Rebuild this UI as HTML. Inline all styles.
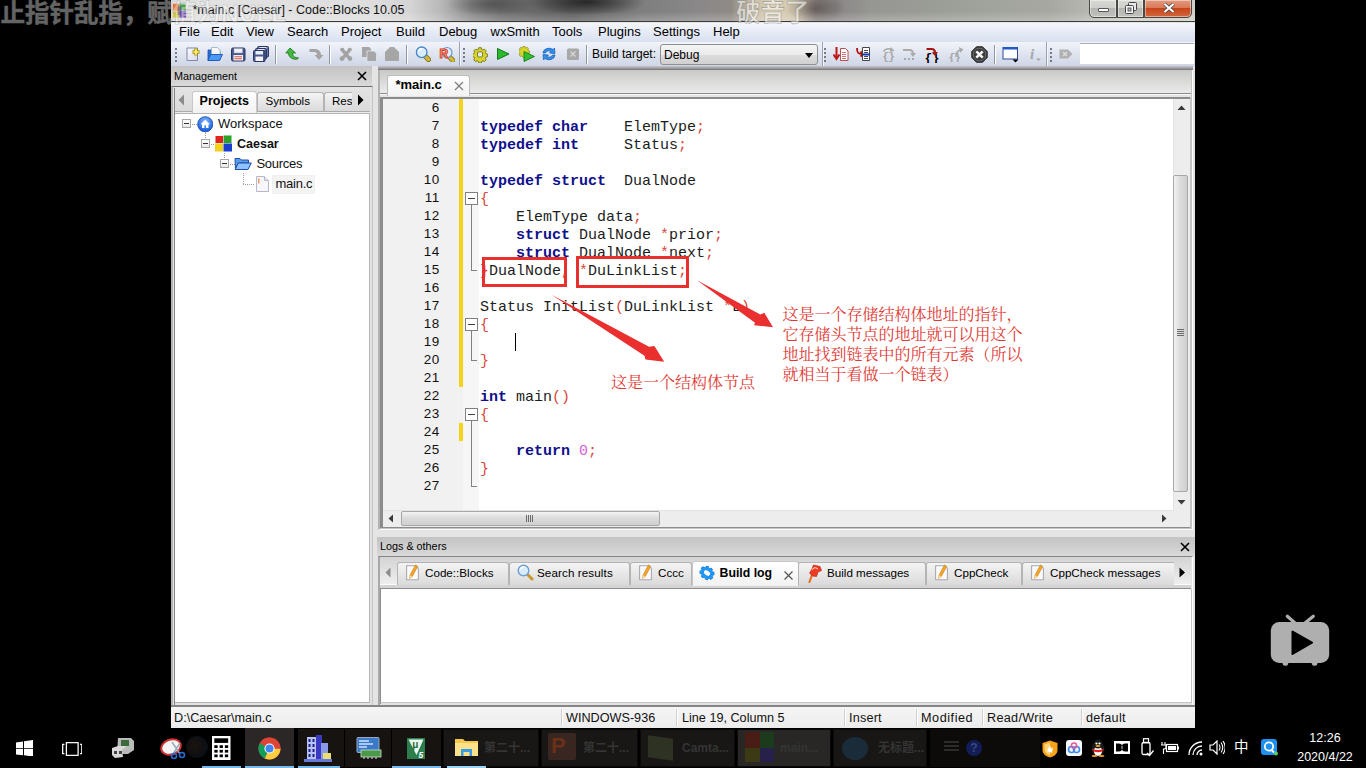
<!DOCTYPE html>
<html lang="zh">
<head>
<meta charset="utf-8">
<title>*main.c [Caesar] - Code::Blocks 10.05</title>
<style>
*{box-sizing:border-box;margin:0;padding:0}
html,body{width:1366px;height:768px;overflow:hidden;background:#000}
body{position:relative;font-family:"Liberation Sans","Noto Sans CJK SC",sans-serif;font-size:12px;color:#000}
.a{position:absolute}
.nw{white-space:nowrap}
/* window */
#win{position:absolute;left:171px;top:0;width:1024px;height:728px;background:#e4e4e4;overflow:hidden}
#title{position:absolute;left:0;top:0;width:1024px;height:22px;background:linear-gradient(rgba(255,255,255,0) 55%,rgba(255,255,255,.22) 100%),radial-gradient(ellipse 60px 13px at 415px 2px,rgba(25,25,25,.8),rgba(25,25,25,0)),radial-gradient(ellipse 45px 12px at 320px 4px,rgba(50,50,50,.5),rgba(50,50,50,0)),radial-gradient(ellipse 30px 16px at 645px 8px,rgba(70,60,60,.55),rgba(70,60,60,0)),linear-gradient(90deg,#dadada 0px,#e2e2e2 30px,#dedede 200px,#d4d4d4 240px,#b8b8b8 270px,#8c8c8c 300px,#707070 330px,#5e5e5e 400px,#6a6a6a 430px,#7e7e7e 470px,#8a8888 530px,#8f8a86 560px,#c4bba6 580px,#dcd2b8 600px,#cfc5ac 625px,#8e8684 645px,#8a8686 665px,#969692 700px,#9a9c96 760px,#a2a49e 830px,#a8a8a2 880px,#b6b6b0 915px,#c8c8c2 945px,#d0d0ca 1024px);border-bottom:1px solid #3c3c3c}
#title .t{position:absolute;left:21.5px;top:3px;font-size:12.5px;color:#111;white-space:nowrap}
#menubar{position:absolute;left:0;top:23px;width:1024px;height:19px;background:linear-gradient(#f4f6fb,#e3e8f4 60%,#d9e0f0)}
#menubar span{position:absolute;top:0.5px;font-size:13px;white-space:nowrap}
#toolbar{position:absolute;left:0;top:42px;width:1024px;height:24px;background:linear-gradient(#f2f4fa,#dfe4f0 50%,#cfd6e6)}
/* panes (coords relative to #win) */
.cap{position:absolute;height:20px;background:linear-gradient(#c3c3c3,#d9d9d9);font-size:10.8px;line-height:20px;padding-left:3px;white-space:nowrap}
.cap .x{position:absolute;right:3px;top:0;width:14px;height:20px}
.tabrow{position:absolute;background:linear-gradient(#e9e9e9,#d2d2d2)}
.tab{position:absolute;font-size:12px;white-space:nowrap;text-align:center;background:linear-gradient(#f4f4f4,#dadada);border:1px solid #b4b4b4;border-bottom:none;border-radius:3px 3px 0 0}
.tab.on{background:linear-gradient(#ffffff,#f2f2f2);font-weight:bold;border-color:#c8c8c8}
/* editor */
#ed{position:absolute;left:212px;top:99px;width:807px;height:428px;background:#fff;overflow:hidden}
#lnm{position:absolute;left:0;top:0;width:80px;height:411px;background:#f1f1f1}
.ln{position:absolute;right:23.500px;letter-spacing:.35px;width:50px;height:18px;line-height:17px;text-align:right;font-size:13.5px;color:#111}
#fold{position:absolute;left:80px;top:0;width:16px;height:411px;background:#f6f6f6}
.cl{position:absolute;left:97px;height:18px;line-height:18px;margin-top:2px;font-family:"Liberation Mono",monospace;font-size:15px;white-space:pre;color:#1c1c1c}
.cl b.k{color:#10108c;font-weight:bold}
.cl i{font-style:normal}
.cl i.o{color:#d8483c}
.cl i.n{color:#d860d8}
.fb{position:absolute;left:82px;width:13px;height:13px;border:1px solid #808080;background:#fff}
.fb:after{content:"";position:absolute;left:2px;top:5px;width:7px;height:1px;background:#404040}
.fl{position:absolute;left:88px;width:1px;background:#808080}
.fe{position:absolute;left:88px;width:6px;height:1px;background:#808080}
.red{position:absolute;border:3px solid #e8302f}
.zh{position:absolute;font-family:"Liberation Serif","Noto Serif CJK SC",serif;color:#e03a35;font-size:16px;white-space:nowrap;line-height:20px}

.tl{position:absolute;height:0;border-top:1px dotted #9a9a9a}
.tv{position:absolute;width:0;border-left:1px dotted #9a9a9a}
.tb{position:absolute;width:9px;height:9px;border:1px solid #a6a6a6;background:linear-gradient(#fff,#e8e8e8)}
.tb:after{content:"";position:absolute;left:1px;top:3px;width:5px;height:1px;background:#333}
.tt{position:absolute;font-size:13px;line-height:18px;white-space:nowrap;color:#111}

.tab.lt{top:562px;height:22.5px;line-height:20px;font-size:11.65px;text-align:left}
#status{position:absolute;left:0;top:705px;width:1024px;height:23px;background:linear-gradient(#f5f5f5,#ececec);border-top:2px solid #858585;z-index:3}
#status span{position:absolute;top:3px;font-size:12.65px;line-height:16px;white-space:nowrap;color:#111}
#status i{position:absolute;top:2px;width:1px;height:17px;background:#d0d0d0;border-right:1px solid #fff;width:2px}

.grip{position:absolute;top:47px;width:4px;height:16px;background:repeating-linear-gradient(transparent 0 1px,#5a6070 1px 3px,transparent 3px 4px);background-size:2px 4px;background-repeat:repeat-y;background-position:1px 0;opacity:.8}
.tsep{position:absolute;top:45px;width:1px;height:19px;background:#8f96a6;box-shadow:1px 0 0 #fff}

#cbtn{position:absolute;left:918px;top:0;width:104px;height:18px}
.cb{position:absolute;top:-1px;height:19px;border:1px solid #474747;background:linear-gradient(#d8d8d4 0,#cfcfca 45%,#b4b4b0 50%,#c2c2be 100%);box-shadow:inset 0 0 0 1px rgba(255,255,255,.45)}
.cb.cx{background:linear-gradient(#e39a80 0,#d97a58 45%,#c8451c 50%,#d4663c 100%)}

.dm{position:absolute;white-space:nowrap;font-family:"Liberation Sans","Noto Sans CJK SC",sans-serif;font-weight:bold;font-size:24.500px;line-height:34px;height:34px}
#tbar{position:absolute;left:0;top:728px;width:1366px;height:40px;background:#000}
#tbar .ul{position:absolute;top:37.500px;height:2.500px;background:#76b9ed}
.dimb{position:absolute;top:1px;height:38px;background:#191715;border:1px solid #0b0a09}
.dimt{position:absolute;top:11px;font-size:12px;line-height:18px;color:#343434;white-space:nowrap;font-weight:bold;font-family:"Liberation Sans","Noto Sans CJK SC",sans-serif}
.tile{position:absolute;top:1px;height:38px;background:#171311}
</style>
</head>
<body>
<div id="win">
  <div id="title">
    <svg class="a" style="left:1.300px;top:2.500px" width="15" height="15.500" viewBox="0 0 17 18" preserveAspectRatio="none"><rect x="1" y="1" width="7" height="8" fill="#e8742a"/><rect x="8.500" y="0.500" width="7" height="8" fill="#4aa848"/><rect x="1" y="9.500" width="7" height="7.500" fill="#d8c838"/><rect x="8.500" y="9" width="7.500" height="8" fill="#7a50b8"/><rect x="6" y="4" width="5" height="10" fill="#5a4a88" opacity=".55"/></svg>
    <span class="t">*main.c [Caesar] - Code::Blocks 10.05</span>
    <div id="cbtn">
      <div class="cb" style="left:0;width:28px;border-radius:0 0 0 5px"><div class="a" style="left:8px;top:8px;width:11px;height:4px;background:#fff;border:1px solid #555;border-radius:1px"></div></div>
      <div class="cb" style="left:28px;width:27px"><svg class="a" style="left:7px;top:2px" width="12" height="12" viewBox="0 0 12 12"><rect x="3.500" y="0.500" width="8" height="8" rx="1" fill="#e8e8e8" stroke="#444"/><rect x="0.500" y="3.500" width="8" height="8" rx="1" fill="#f4f4f4" stroke="#444"/><rect x="3" y="6" width="3" height="3" fill="#bbb" stroke="#444" stroke-width="0.800"/></svg></div>
      <div class="cb cx" style="left:55px;width:48px;border-radius:0 0 5px 0"><svg class="a" style="left:18px;top:3px" width="12" height="10" viewBox="0 0 12 10"><path d="M1.500 1l9 8M10.500 1l-9 8" stroke="#444" stroke-width="3.600"/><path d="M1.500 1l9 8M10.500 1l-9 8" stroke="#fff" stroke-width="2.200"/></svg></div>
    </div>
  </div>
  <div id="menubar">
    <span style="left:8px">File</span><span style="left:40px">Edit</span><span style="left:75px">View</span><span style="left:116px">Search</span><span style="left:170px">Project</span><span style="left:225px">Build</span><span style="left:268px">Debug</span><span style="left:319.5px">wxSmith</span><span style="left:381px">Tools</span><span style="left:427px">Plugins</span><span style="left:482px">Settings</span><span style="left:542px">Help</span>
  </div>
  <div id="toolbar"></div>
  <div id="tbi">
    <div class="a" style="left:287.5px;top:42px;width:1px;height:24px;background:#9aa0ae;box-shadow:1px 0 0 #f4f6fa"></div><div class="a" style="left:650.5px;top:42px;width:1px;height:24px;background:#9aa0ae;box-shadow:1px 0 0 #f4f6fa"></div><div class="a" style="left:875px;top:42px;width:1px;height:24px;background:#9aa0ae;box-shadow:1px 0 0 #f4f6fa"></div>
    <div class="grip" style="left:3px"></div>
    <svg class="a" style="left:13.5px;top:46px" width="16" height="16" viewBox="0 0 16 16"><defs><linearGradient id="pg" x1="0" y1="0" x2="1" y2="1"><stop offset="0" stop-color="#fafaff"/><stop offset="1" stop-color="#d8d8ea"/></linearGradient></defs><path d="M2 2h10.500v12.500h-10.500z" fill="url(#pg)" stroke="#8088a8"/><path d="M11 2.500v7M7.500 6h7" stroke="#a89400" stroke-width="3.400"/><path d="M11 3.300v5.400M8.300 6h5.400" stroke="#fff27a" stroke-width="1.700"/></svg>
    <svg class="a" style="left:36px;top:46px" width="16" height="16" viewBox="0 0 16 16"><path d="M1 4h3.500l1 1.500h7.500v8.500h-12z" fill="#2a6fd0" stroke="#1a4fa8" stroke-width="0.800"/><path d="M4.500 1.500h6l2.500 2.500v5h-8.500z" fill="#f4f6fa" stroke="#a0a8b8" stroke-width="0.800"/><path d="M3.800 8.500h11.700L12.500 14.500H0.800z" fill="#4a9af4" stroke="#1a56b8" stroke-width="0.900"/></svg>
    <svg class="a" style="left:59px;top:46px" width="16" height="16" viewBox="0 0 16 16"><rect x="1.500" y="2" width="13.500" height="13" rx="1.500" fill="#46588e" stroke="#2a3660"/><rect x="4" y="2.500" width="8.500" height="4.500" fill="#eef0f6" stroke="#9aa0b8" stroke-width="0.500"/><rect x="3.500" y="9" width="9.500" height="5.500" fill="#f0f0f2"/><path d="M4.500 10.700h7.500M4.500 12.700h7.500" stroke="#e0584a" stroke-width="1.100"/></svg>
    <svg class="a" style="left:81.5px;top:45.5px" width="17" height="17" viewBox="0 0 17 17"><rect x="4.500" y="0.500" width="11" height="10.500" rx="1" fill="#6a7aa8" stroke="#2a3660"/><rect x="6.500" y="1" width="7" height="2.500" fill="#e4e8f2"/><rect x="2.500" y="2.500" width="11" height="10.500" rx="1" fill="#5a6c9e" stroke="#2a3660"/><rect x="4.500" y="3" width="7" height="2.500" fill="#e4e8f2"/><rect x="0.500" y="4.500" width="11.500" height="11" rx="1" fill="#46588e" stroke="#2a3660"/><rect x="2.500" y="5" width="7.500" height="3.500" fill="#e9edf7"/><rect x="2.500" y="10.500" width="7.500" height="4.500" fill="#f4f4f4"/></svg>
    <div class="tsep" style="left:104px"></div>
    <svg class="a" style="left:112.5px;top:46px" width="16" height="16" viewBox="0 0 16 16"><path d="M6 2L1.800 7h2.700c0 3.500 2.500 6 7 6.300 1.500 0 2.500-0.500 3-1.500-3.500 0-6-1.300-6-4.800h3z" fill="#44b840" stroke="#1f7a1f" stroke-width="0.900"/></svg>
    <svg class="a" style="left:137px;top:46px" width="16" height="16" viewBox="0 0 16 16"><path d="M1.500 3h5c4 0 6.500 2.500 6.500 6h2.500l-4.500 5-4.500-5h2.500c0-2-1-3-3-3h-4.500z" fill="#a4a4a4"/></svg>
    <div class="tsep" style="left:158px"></div>
    <svg class="a" style="left:167px;top:46px" width="16" height="16" viewBox="0 0 16 16"><path d="M4 3.500l8 9.500M12 3.500l-8 9.500" stroke="#a2a2a2" stroke-width="3.400" stroke-linecap="round"/><circle cx="4" cy="12.500" r="2.300" fill="#a2a2a2"/><circle cx="12" cy="12.500" r="2.300" fill="#a2a2a2"/><circle cx="4.300" cy="3.600" r="1.900" fill="#a2a2a2"/><circle cx="11.700" cy="3.600" r="1.900" fill="#a2a2a2"/></svg>
    <svg class="a" style="left:190px;top:46px" width="16" height="16" viewBox="0 0 16 16"><path d="M1 1h7l2 2v8h-9z" fill="#a6a6a6"/><path d="M6 5h7l2.500 2.500v8h-9.500z" fill="#a6a6a6" stroke="#dfe4ee" stroke-width="0.800"/></svg>
    <svg class="a" style="left:213px;top:46px" width="16" height="16" viewBox="0 0 16 16"><path d="M1 15V6l3-3 2-2h4l2 2 3 3v9z" fill="#a6a6a6"/></svg>
    <div class="tsep" style="left:235px"></div>
    <svg class="a" style="left:243.5px;top:46px" width="16" height="16" viewBox="0 0 16 16"><path d="M10.500 10.500l3 3" stroke="#7a6a18" stroke-width="5" stroke-linecap="round"/><path d="M10.500 10.500l3 3" stroke="#d0b838" stroke-width="3.400" stroke-linecap="round"/><circle cx="6.700" cy="6.300" r="5.300" fill="#d8ecfa" stroke="#4a86c8" stroke-width="1.300"/><path d="M3.500 5.500a3.500 3.500 0 0 1 4-2.700" stroke="#fff" stroke-width="1.400" fill="none"/></svg>
    <svg class="a" style="left:266.5px;top:46px" width="17" height="16" viewBox="0 0 17 16"><path d="M12 11.500l3 3" stroke="#7a6a18" stroke-width="5" stroke-linecap="round"/><path d="M12 11.500l3 3" stroke="#d0b838" stroke-width="3.400" stroke-linecap="round"/><circle cx="9" cy="6.500" r="5" fill="#e4eef8" stroke="#6a9ad0" stroke-width="1.200"/><text x="1.500" y="11.500" font-family="Liberation Sans,sans-serif" font-weight="bold" font-size="12" fill="#f8c8b8" stroke="#d8401c" stroke-width="1">R</text></svg>
    <div class="grip" style="left:291px"></div>
    <svg class="a" style="left:301.8px;top:46.5px" width="15" height="16" viewBox="0 0 15 16"><g transform="translate(0.300 0.300) scale(0.840)"><path d="M6.500 0.500h3l0.500 2 1.500 0.700 1.800-1 2.100 2.100-1 1.800 0.700 1.500 2 0.500v3l-2 0.500-0.700 1.500 1 1.800-2.100 2.100-1.800-1-1.500 0.700-0.500 2h-3l-0.500-2-1.500-0.700-1.800 1-2.100-2.100 1-1.800-0.700-1.500-2-0.500v-3l2-0.500 0.700-1.500-1-1.800 2.100-2.100 1.800 1 1.500-0.700z" fill="#d6d430" stroke="#76760c" stroke-width="1.100"/><rect x="5" y="5.500" width="6" height="6" rx="1.200" fill="#e6e8f2" stroke="#76760c" stroke-width="1.100"/></g></svg>
    <svg class="a" style="left:324px;top:46px" width="16" height="16" viewBox="0 0 16 16"><path d="M2.500 2.500L14 8 2.500 13.500z" fill="#2eb82e" stroke="#167a1a" stroke-width="1"/></svg>
    <svg class="a" style="left:348px;top:46px" width="16" height="16" viewBox="0 0 16 16"><g transform="scale(0.62)"><path d="M6.500 0.500h3l0.500 2 1.500 0.700 1.800-1 2.100 2.100-1 1.800 0.700 1.500 2 0.500v3l-2 0.500-0.700 1.500 1 1.800-2.100 2.100-1.800-1-1.500 0.700-0.500 2h-3l-0.500-2-1.500-0.700-1.800 1-2.100-2.100 1-1.800-0.700-1.500-2-0.500v-3l2-0.500 0.700-1.500-1-1.800 2.100-2.100 1.800 1 1.500-0.700z" fill="#d8d42c" stroke="#78780c"/></g><path d="M5 5.500L15.500 10.500 5 15.500z" fill="#2fbf2f" stroke="#15801a" stroke-width="0.900"/></svg>
    <svg class="a" style="left:370px;top:46px" width="16" height="16" viewBox="0 0 16 16"><path d="M2 7a6 5 0 0 1 10-3.500l1.500-1.500 0.500 5.500-5.500-0.500 1.500-1.500a3.500 3 0 0 0-5.500 1.500z" fill="#2f8ff0" stroke="#1558b0" stroke-width="0.700"/><path d="M14 9a6 5 0 0 1-10 3.500l-1.500 1.500-0.500-5.500 5.500 0.500-1.500 1.500a3.500 3 0 0 0 5.500-1.500z" fill="#2f8ff0" stroke="#1558b0" stroke-width="0.700"/></svg>
    <svg class="a" style="left:393.5px;top:46px" width="16" height="16" viewBox="0 0 16 16"><rect x="2" y="2.500" width="12" height="11.500" rx="1.500" fill="#a8a8a8"/><path d="M5.500 5.500l5 5M10.500 5.500l-5 5" stroke="#d8d8d8" stroke-width="1.200"/></svg>
    <div class="tsep" style="left:415px"></div>
    <div class="grip" style="left:652px"></div>
    <svg class="a" style="left:661.7px;top:46px" width="16" height="16" viewBox="0 0 16 16"><path d="M3.500 1v11M0.500 8.500l3 4.500 3-4.500" stroke="#c01818" stroke-width="2" fill="none"/><path d="M7.500 2.500h5l2.500 2.500v9.500h-7.500z" fill="#fff" stroke="#b04040" stroke-width="0.900"/><path d="M9 6.500h4M9 8.500h4M9 10.500h4M9 12.500h4" stroke="#c05050" stroke-width="0.800"/></svg>
    <svg class="a" style="left:684.5px;top:46px" width="17" height="16" viewBox="0 0 17 16"><path d="M1 2c0 5 1 6 6 6M4.500 5.500l3 2.500-3 2.500" stroke="#b01010" stroke-width="1.800" fill="none"/><path d="M6.500 1.500h7v13h-7z" fill="#fff" stroke="#333" stroke-width="0.900"/><path d="M8 4.500h4M8 6.500h4M8 10.500h4M8 12.500h4" stroke="#333" stroke-width="0.900"/><path d="M7 8.500h7" stroke="#1038c0" stroke-width="2"/></svg>
    <svg class="a" style="left:708.5px;top:46px" width="16" height="16" viewBox="0 0 16 16"><path d="M3.500 5.500a5.500 4.500 0 0 1 9.500-1" stroke="#aaa" stroke-width="1.600" fill="none"/><path d="M11 1l3.500 4.200-4.800 0.300z" fill="#aaa"/><text x="2.200" y="14.200" font-family="Liberation Mono,monospace" font-weight="bold" font-size="11.500" letter-spacing="-1.200" fill="#a8a8a8">{}</text></svg>
    <svg class="a" style="left:730px;top:46px" width="16" height="16" viewBox="0 0 16 16"><path d="M2 4h6.500c3 0 3.500 1.500 3.500 4" stroke="#aaa" stroke-width="1.800" fill="none"/><path d="M9 7l3 4 3-4z" fill="#aaa"/><path d="M3 13h2M7 13h2M11 13h2" stroke="#aaa" stroke-width="2"/></svg>
    <svg class="a" style="left:753.2px;top:45.5px" width="17" height="17" viewBox="0 0 17 17"><text x="0.500" y="15.500" font-family="Liberation Mono,monospace" font-weight="bold" font-size="13" letter-spacing="-0.500" fill="#000">{}</text><path d="M2.500 3h5c3 0 3.500 1.500 3.500 4" stroke="#a81414" stroke-width="2.200" fill="none"/><path d="M8 6l3 4 3-4z" fill="#a81414"/></svg>
    <svg class="a" style="left:777px;top:46px" width="16" height="16" viewBox="0 0 16 16"><text x="0.500" y="14.500" font-family="Liberation Mono,monospace" font-weight="bold" font-size="11.500" letter-spacing="-1.500" fill="#a8a8a8">{}</text><path d="M8 11c0-4 1.500-6.500 5-7" stroke="#aaa" stroke-width="1.700" fill="none"/><path d="M11 1l4.500 2.500-3.500 3.500z" fill="#aaa"/></svg>
    <svg class="a" style="left:799.5px;top:45.5px" width="17" height="17" viewBox="0 0 17 17"><path d="M5.500 0.800h6l4.700 4.700v6l-4.700 4.700h-6L0.800 11.500v-6z" fill="#3c3c3c" stroke="#1e1e1e"/><path d="M6 2.300h5l3.700 3.700v5l-3.700 3.700h-5L2.300 11v-5z" fill="none" stroke="#777" stroke-width="0.800"/><path d="M5.300 5.300l6.400 6.400M11.700 5.300l-6.400 6.400" stroke="#f4f4f4" stroke-width="2.600"/></svg>
    <div class="tsep" style="left:823px"></div>
    <svg class="a" style="left:830.5px;top:45.5px" width="17" height="17" viewBox="0 0 17 17"><rect x="1" y="1.500" width="14.500" height="11.500" fill="#fff" stroke="#2a4a9a"/><rect x="1" y="1" width="14.500" height="2.500" fill="#2458c8"/><path d="M10.500 13.500h6l-3 3z" fill="#000"/></svg>
    <svg class="a" style="left:855.5px;top:46px" width="16" height="16" viewBox="0 0 16 16"><text x="3" y="13" font-family="Liberation Serif,serif" font-style="italic" font-weight="bold" font-size="15" fill="#a6a6a6">i</text><path d="M9 12.500h5l-2.500 2.500z" fill="#a6a6a6"/></svg>
    <div class="grip" style="left:878px"></div>
    <svg class="a" style="left:887px;top:46px" width="16" height="16" viewBox="0 0 16 16"><path d="M1.500 3.500h8.500l4.500 4.500-4.500 4.500h-8.500z" fill="#b0b0b0"/><path d="M5 6l4 4M9 6l-4 4" stroke="#dedede" stroke-width="1.400"/></svg>
    <span class="a nw" style="left:421px;top:46px;font-size:12px;line-height:16px">Build target:</span>
    <div class="a" style="left:489px;top:44px;width:158px;height:21px;border:1px solid #8e8f8f;border-radius:3px;background:linear-gradient(#f4f4f4,#ebebeb 50%,#dddddd 51%,#d0d0d0)"><span class="a nw" style="left:3px;top:1.5px;font-size:12px;line-height:16px">Debug</span><svg class="a" style="right:4px;top:8px" width="8" height="5" viewBox="0 0 8 5"><path d="M0 0h8L4 5z" fill="#000"/></svg></div>
    <div class="a" style="left:909px;top:43px;width:114px;height:21px;background:#fff;border-top:1px solid #abadb3"></div>
  </div>

  <!-- Management pane -->
  <div class="cap" style="left:0px;top:65.5px;width:201px;height:20.5px;line-height:20px">Management<svg class="x" viewBox="0 0 14 20"><path d="M3 6l8 8M11 6l-8 8" stroke="#000" stroke-width="1.6" fill="none"/></svg></div>
  <div class="a" style="left:0;top:85.7px;width:202px;height:620.3px;background:#e2e2e2;border-top:1.3px solid #6e6e6e;border-left:2px solid #b4b4b4;border-right:1px solid #c4c4c4;border-bottom:1px solid #b8b8b8"></div>
  <div class="a" style="left:2.5px;top:87.5px;width:1px;height:617px;background:#858585"></div>
  <div class="tabrow" style="left:3.5px;top:87px;width:195.5px;height:24px;background:linear-gradient(#e4e4e4,#dadada)"></div>
  <div class="a" style="left:3.5px;top:110.5px;width:195.5px;height:3px;background:#ececec;border-top:1px solid #ababab;border-bottom:1px solid #b4b4b4"></div>
  <div class="a" style="left:3.5px;top:113.5px;width:195.5px;height:590px;background:#fff;border-right:1px solid #b8b8b8;border-bottom:1.500px solid #b2b2b2;height:589.5px"></div>


  <!-- mgmt tabs -->
  <svg class="a" style="left:7px;top:94px" width="7" height="12" viewBox="0 0 7 12"><path d="M6 0.5v11L0.5 6z" fill="#8c8c8c"/></svg>
  <div class="tab on" style="left:20.5px;top:90.5px;width:65.5px;height:22px;line-height:18.500px;font-size:12.5px">Projects</div>
  <div class="tab" style="left:86px;top:91.5px;width:67px;height:19.5px;line-height:16px;font-size:11.6px;text-align:left;padding-left:7.500px">Symbols</div>
  <div class="tab" style="left:153px;top:91.5px;width:28px;height:19.5px;line-height:16px;font-size:11.6px;border-right:none;border-radius:3px 0 0 0;overflow:hidden;text-align:left;padding-left:7px">Res</div>
  <svg class="a" style="left:186px;top:94px" width="7" height="12" viewBox="0 0 7 12"><path d="M1 0.5v11L6.5 6z" fill="#000"/></svg>
  <!-- tree -->
  <div id="tree">
    <div class="tl" style="left:16px;top:124px;width:10px"></div>
    <div class="tv" style="left:34px;top:132px;height:8px"></div>
    <div class="tl" style="left:35px;top:144px;width:10px"></div>
    <div class="tv" style="left:53px;top:153px;height:7px"></div>
    <div class="tl" style="left:54px;top:164px;width:10px"></div>
    <div class="tv" style="left:72px;top:173px;height:11px"></div>
    <div class="tl" style="left:72px;top:184px;width:11px"></div>
    <div class="tb" style="left:11px;top:119px"></div>
    <div class="tb" style="left:30px;top:139px"></div>
    <div class="tb" style="left:49px;top:159px"></div>
    <svg class="a" style="left:25.500px;top:115.500px" width="16.500" height="16.500" viewBox="0 0 18 18"><defs><radialGradient id="wg" cx="50%" cy="30%" r="70%"><stop offset="0" stop-color="#7fb6ff"/><stop offset="1" stop-color="#1257d8"/></radialGradient></defs><circle cx="9" cy="9" r="8.3" fill="url(#wg)" stroke="#0b3fa8" stroke-width="0.8"/><path d="M9 4L3.8 9h1.7v4h2.6v-2.8h1.8V13h2.600V9h1.700z" fill="#fff"/></svg>
    <span class="tt" style="left:47px;top:115px">Workspace</span>
    <svg class="a" style="left:44px;top:135px" width="17" height="17" viewBox="0 0 17 17"><rect x="0.500" y="1" width="7.500" height="7" fill="#e2231a"/><rect x="8.500" y="0.500" width="8" height="7.500" fill="#2aa22a"/><rect x="0" y="8.500" width="8" height="8" fill="#f2d21c"/><rect x="8.500" y="8.500" width="8.500" height="8" fill="#1b3fd0"/></svg>
    <span class="tt" style="left:66px;top:135px;font-weight:bold;font-size:12.5px">Caesar</span>
    <svg class="a" style="left:63px;top:156px" width="18" height="15" viewBox="0 0 18 15"><path d="M1 2.500h5l1.500 1.500h7v3H4.500L1.500 13z" fill="#5b9be8" stroke="#1c4fa8" stroke-width="1"/><path d="M4.300 7h13L14 13.500H1.200z" fill="#8ec2ff" stroke="#1c4fa8" stroke-width="1"/></svg>
    <span class="tt" style="left:85.4px;top:155px;letter-spacing:-.25px">Sources</span>
    <div class="a" style="left:101px;top:175px;width:43px;height:19px;background:#f4f4f4;border:1px solid #f0f0f0"></div>
    <svg class="a" style="left:85px;top:176px" width="13" height="16" viewBox="0 0 13 16"><path d="M0.500 0.500h8l4 4v11h-12z" fill="#f6f6fb" stroke="#b8b8c8"/><path d="M8.500 0.500v4h4" fill="#e6e6ee" stroke="#b8b8c8"/><rect x="2" y="2.500" width="1.500" height="5" fill="#e8a060"/></svg>
    <span class="tt" style="left:104.5px;top:175px;letter-spacing:-.25px">main.c</span>
  </div>

  <!-- Editor notebook -->
  <div class="a" style="left:206.5px;top:66.5px;width:815px;height:463.5px;background:#dcdcdc;border-left:2px solid #b2b2b2;border-top:1px solid #a0a0a0;border-right:1px solid #fdfdfd;border-bottom:1.5px solid #fdfdfd"></div>
  <div class="a" style="left:208.5px;top:67.5px;width:811.5px;height:461px;background:#8c8c8c"></div>
  <div class="a" style="left:1019px;top:68px;width:1.5px;height:460.500px;background:#c4c4c4"></div>
  <div class="a" style="left:209px;top:527.5px;width:811px;height:1px;background:#c4c4c4"></div>
  <div class="a" style="left:206.5px;top:65.5px;width:815px;height:4px;background:linear-gradient(#c4c4cc,#a0a0a4 55%,#707070)"></div>
  <div class="tabrow" style="left:209px;top:69.5px;width:810.5px;height:24px;background:linear-gradient(#c9c9c6,#ececec)"></div>
  <div class="a" style="left:209px;top:93px;width:810.5px;height:3.5px;background:#e4e4e4;border-top:1px solid #8c8c8c"></div>
  <div class="a" style="left:209px;top:94px;width:810.5px;height:1px;background:#f8f8f8"></div>
  <div class="tab on" style="left:215.5px;top:74.5px;width:83px;height:21.5px;font-size:13px;line-height:18px;text-align:left;padding-left:8px;border-bottom:none;border-color:#bdbdbd">*main.c<svg class="a" style="right:4.500px;top:5px" width="10" height="10" viewBox="0 0 10 10"><path d="M1 1l8 8M9 1l-8 8" stroke="#7c7c7c" stroke-width="1.200" fill="none"/></svg></div>

  <div id="ed">
    <div id="lnm"><div class="ln" style="top:0px">6</div><div class="ln" style="top:18px">7</div><div class="ln" style="top:36px">8</div><div class="ln" style="top:54px">9</div><div class="ln" style="top:72px">10</div><div class="ln" style="top:90px">11</div><div class="ln" style="top:108px">12</div><div class="ln" style="top:126px">13</div><div class="ln" style="top:144px">14</div><div class="ln" style="top:162px">15</div><div class="ln" style="top:180px">16</div><div class="ln" style="top:198px">17</div><div class="ln" style="top:216px">18</div><div class="ln" style="top:234px">19</div><div class="ln" style="top:252px">20</div><div class="ln" style="top:270px">21</div><div class="ln" style="top:288px">22</div><div class="ln" style="top:306px">23</div><div class="ln" style="top:324px">24</div><div class="ln" style="top:342px">25</div><div class="ln" style="top:360px">26</div><div class="ln" style="top:378px">27</div></div>
    <div class="a" style="left:76px;top:0;width:4px;height:288px;background:#f5d31a"></div>
    <div class="a" style="left:76px;top:324px;width:4px;height:18px;background:#f5d31a"></div>
    <div id="fold"></div><div class="fb" style="top:93px"></div><div class="fl" style="top:106px;height:65px"></div><div class="fe" style="top:171px"></div><div class="fb" style="top:219px"></div><div class="fl" style="top:232px;height:29px"></div><div class="fe" style="top:261px"></div><div class="fb" style="top:309px"></div><div class="fl" style="top:322px;height:65px"></div><div class="fe" style="top:387px"></div>
    <div class="cl" style="top:18px"><b class="k">typedef</b> <b class="k">char</b>    ElemType<i class="o">;</i></div><div class="cl" style="top:36px"><b class="k">typedef</b> <b class="k">int</b>     Status<i class="o">;</i></div><div class="cl" style="top:72px"><b class="k">typedef</b> <b class="k">struct</b>  DualNode</div><div class="cl" style="top:90px"><i class="o">{</i></div><div class="cl" style="top:108px">    ElemType data<i class="o">;</i></div><div class="cl" style="top:126px">    <b class="k">struct</b> DualNode <i class="o">*</i>prior<i class="o">;</i></div><div class="cl" style="top:144px">    <b class="k">struct</b> DualNode <i class="o">*</i>next<i class="o">;</i></div><div class="cl" style="top:162px"><i class="o">}</i>DualNode<i class="o">,</i> <i class="o">*</i>DuLinkList<i class="o">;</i></div><div class="cl" style="top:198px">Status InitList<i class="o">(</i>DuLinkList <i class="o">*</i>L<i class="o">)</i></div><div class="cl" style="top:216px"><i class="o">{</i></div><div class="cl" style="top:252px"><i class="o">}</i></div><div class="cl" style="top:288px"><b class="k">int</b> main<i class="o">()</i></div><div class="cl" style="top:306px"><i class="o">{</i></div><div class="cl" style="top:342px">    <b class="k">return</b> <i class="n">0</i><i class="o">;</i></div><div class="cl" style="top:360px"><i class="o">}</i></div>


    <!-- annotations (inside #ed origin 383,99) -->
    <div class="a" style="left:132px;top:234px;width:1px;height:18px;background:#000"></div>
    <div class="red" style="left:99px;top:158px;width:85px;height:30px"></div>
    <div class="red" style="left:193px;top:157px;width:113px;height:32px"></div>
    <svg class="a" style="left:150px;top:170px" width="260" height="110" viewBox="533 269 260 110">
      <path d="M551.500 294.800 L649 346.800 L654.400 346 L664.200 361.800 L645.500 359.600 L644.500 355.800 Z" fill="#ea2f2f"/>
      <path d="M697 280.300 L760.300 314.600 L764.300 312.800 L773 327.300 L754 325.200 L755 322.800 Z" fill="#ea2f2f"/>
    </svg>
    <div class="zh" style="left:228px;top:273.5px">这是一个结构体节点</div>
    <div class="zh" style="left:399.5px;top:206px">这是一个存储结构体地址的指针，<br>它存储头节点的地址就可以用这个<br>地址找到链表中的所有元素（所以<br>就相当于看做一个链表）</div>

    <!-- scrollbars (inside #ed: origin 383,99) -->
    <div class="a" style="left:790px;top:0;width:17px;height:411px;background:#ededed;border-left:1px solid #e3e3e3"></div>
    <svg class="a" style="left:794px;top:6px" width="9" height="6" viewBox="0 0 9 6"><path d="M4.500 0.500L8.500 5h-8z" fill="#3a3a3a"/></svg>
    <svg class="a" style="left:794px;top:400px" width="9" height="6" viewBox="0 0 9 6"><path d="M4.500 5.500L8.500 1h-8z" fill="#3a3a3a"/></svg>
    <div class="a" style="left:790px;top:76px;width:15px;height:317px;border:1px solid #a8a8a8;border-radius:2px;background:linear-gradient(90deg,#f3f3f3,#dcdcdc 45%,#cfcfcf)"></div>
    <div class="a" style="left:794px;top:230px;width:7px;height:7px;background:repeating-linear-gradient(#6a6a6a 0 1px,transparent 1px 2px)"></div>
    <div class="a" style="left:0;top:411px;width:790px;height:17px;background:#ededed;border-top:1px solid #e3e3e3"></div>
    <svg class="a" style="left:5px;top:415px" width="6" height="9" viewBox="0 0 6 9"><path d="M0.500 4.500L5 0.500v8z" fill="#3a3a3a"/></svg>
    <svg class="a" style="left:778px;top:415px" width="6" height="9" viewBox="0 0 6 9"><path d="M5.500 4.500L1 0.500v8z" fill="#3a3a3a"/></svg>
    <div class="a" style="left:18px;top:412px;width:259px;height:15px;border:1px solid #a8a8a8;border-radius:2px;background:linear-gradient(#f3f3f3,#dcdcdc 45%,#cfcfcf)"></div>
    <div class="a" style="left:143px;top:416px;width:7px;height:7px;background:repeating-linear-gradient(90deg,#6a6a6a 0 1px,transparent 1px 2px)"></div>
    <div class="a" style="left:790px;top:411px;width:17px;height:17px;background:#ededed"></div>
  </div>

  <!-- Logs pane -->
  <div class="cap" style="left:206px;top:537px;width:818px;height:19px;line-height:18px">Logs &amp; others<svg class="x" viewBox="0 0 14 20" style="right:3.500px"><path d="M3 6l8 8M11 6l-8 8" stroke="#000" stroke-width="1.6" fill="none"/></svg></div>
  <div class="a" style="left:206.5px;top:555.5px;width:815px;height:150px;background:#e2e2e2;border-left:2px solid #a8a8a8;border-top:1.5px solid #858585;border-right:1px solid #fdfdfd;border-bottom:1px solid #fdfdfd"></div>
  <div class="a" style="left:208.500px;top:557px;width:1px;height:147px;background:#8c8c8c"></div>
  <div class="tabrow" style="left:209px;top:557px;width:811px;height:27.5px;background:linear-gradient(#d4d4d4,#efefef)"></div>
  <div class="a" style="left:209px;top:584px;width:811px;height:4.5px;background:#d4d4d4;border-top:1px solid #fbfbfb;border-bottom:1.5px solid #8e8e8e"></div>
  <div class="a" style="left:209px;top:588.5px;width:811.5px;height:114.5px;background:#fff;border-left:1.800px solid #8c8c8c;border-right:1px solid #c4c4c4;border-bottom:1px solid #c4c4c4"></div>


  <!-- logs tabs -->
  <svg class="a" style="left:214px;top:567px" width="6" height="11" viewBox="0 0 6 11"><path d="M5.500 0.500v10L0.500 5.500z" fill="#8c8c8c"/></svg>
  <div class="tab lt" style="left:226px;width:112px;padding-left:27px">Code::Blocks</div><svg class="a" style="left:234px;top:564px" width="15" height="17.500" viewBox="0 0 14 16"><path d="M1.500 1.500h8.500l2.500 2.500v10.500h-11z" fill="#fbfbfb" stroke="#a8a8b0"/><path d="M9.800 0.800l2 1.200-5 9.500-2.400 1.700 0.300-2.900z" fill="#f5a623" stroke="#c77a10" stroke-width="0.600"/><path d="M4.400 13.200l0.300-2.900 2.100 1.200z" fill="#f7e0b0"/></svg>
  <div class="tab lt" style="left:338px;width:121px;padding-left:27px;letter-spacing:.1px">Search results</div><svg class="a" style="left:346px;top:564px" width="17" height="17" viewBox="0 0 17 17"><path d="M10 10l5 5" stroke="#c9962a" stroke-width="3" stroke-linecap="round"/><circle cx="6.500" cy="6.500" r="5.300" fill="#d9ecfb" stroke="#6f9fd0" stroke-width="1.400"/><path d="M3.500 5.500a3.500 3.500 0 0 1 4-2.500" stroke="#fff" stroke-width="1.200" fill="none"/></svg>
  <div class="tab lt" style="left:459px;width:62px;padding-left:27px">Cccc</div><svg class="a" style="left:467px;top:564px" width="15" height="17.500" viewBox="0 0 14 16"><path d="M1.500 1.500h8.500l2.500 2.500v10.500h-11z" fill="#fbfbfb" stroke="#a8a8b0"/><path d="M9.800 0.800l2 1.200-5 9.500-2.400 1.700 0.300-2.900z" fill="#f5a623" stroke="#c77a10" stroke-width="0.600"/><path d="M4.400 13.200l0.300-2.900 2.100 1.200z" fill="#f7e0b0"/></svg>
  <div class="tab lt on" style="left:521px;top:561px;width:107px;height:25px;line-height:23px;padding-left:26.500px;font-size:12.3px">Build log<svg class="a" style="right:5px;top:8.500px" width="9" height="9" viewBox="0 0 9 9"><path d="M0.500 0.500l8 8M8.500 0.500l-8 8" stroke="#555" stroke-width="1.200" fill="none"/></svg></div><svg class="a" style="left:528px;top:565px" width="16" height="16" viewBox="0 0 16 16"><g transform="rotate(38 8 8)"><ellipse cx="8" cy="8" rx="5.600" ry="4.400" fill="none" stroke="#1565c0" stroke-width="4.600" stroke-dasharray="2.300 1.500"/><ellipse cx="8" cy="8" rx="5.200" ry="4" fill="none" stroke="#2196f3" stroke-width="3.400"/><ellipse cx="8" cy="8" rx="5.600" ry="4.400" fill="none" stroke="#2196f3" stroke-width="3.600" stroke-dasharray="2.300 1.500"/><ellipse cx="8" cy="8" rx="3.300" ry="2.100" fill="#f4f8fc"/></g></svg>
  <div class="tab lt" style="left:627px;width:128px;padding-left:28px">Build messages</div><svg class="a" style="left:635px;top:563.500px" width="16" height="19" viewBox="0 0 16 19"><path d="M6 11l-2.500 7" stroke="#e8702a" stroke-width="2.200" stroke-linecap="round"/><path d="M7.500 1l6.500 1.500 1.500 4-3.500 1.500-1.500 4.500-4-0.500-3-3 2-3z" fill="#ee3a24" stroke="#c02810" stroke-width="0.700"/><path d="M6 5.500l3-2 3 1.500" stroke="#ffb8a0" stroke-width="1.300" fill="none"/></svg>
  <div class="tab lt" style="left:755px;width:96px;padding-left:27px">CppCheck</div><svg class="a" style="left:763px;top:564px" width="15" height="17.500" viewBox="0 0 14 16"><path d="M1.500 1.500h8.500l2.500 2.500v10.500h-11z" fill="#fbfbfb" stroke="#a8a8b0"/><path d="M9.800 0.800l2 1.200-5 9.500-2.400 1.700 0.300-2.900z" fill="#f5a623" stroke="#c77a10" stroke-width="0.600"/><path d="M4.400 13.200l0.300-2.900 2.100 1.200z" fill="#f7e0b0"/></svg>
  <div class="tab lt" style="left:851px;width:152px;padding-left:27px;border-right:none;border-radius:3px 0 0 0">CppCheck messages</div><svg class="a" style="left:859px;top:564px" width="15" height="17.500" viewBox="0 0 14 16"><path d="M1.500 1.500h8.500l2.500 2.500v10.500h-11z" fill="#fbfbfb" stroke="#a8a8b0"/><path d="M9.800 0.800l2 1.200-5 9.500-2.400 1.700 0.300-2.900z" fill="#f5a623" stroke="#c77a10" stroke-width="0.600"/><path d="M4.400 13.200l0.300-2.900 2.100 1.200z" fill="#f7e0b0"/></svg>
  <svg class="a" style="left:1008px;top:567px" width="7" height="11" viewBox="0 0 7 11"><path d="M0.500 0.500v10L6 5.500z" fill="#000"/></svg>

  <!-- Status bar -->

  <div id="status">
    <span style="left:3px">D:\Caesar\main.c</span>
    <i style="left:390px"></i><span style="left:395px">WINDOWS-936</span>
    <i style="left:505px"></i><span style="left:511px">Line 19, Column 5</span>
    <i style="left:673px"></i><span style="left:678px;letter-spacing:.2px">Insert</span>
    <i style="left:745px"></i><span style="left:750px;letter-spacing:.55px">Modified</span>
    <i style="left:811px"></i><span style="left:816px;letter-spacing:.3px">Read/Write</span>
    <i style="left:910px"></i><span style="left:915px;letter-spacing:.25px">default</span>
  </div>

</div>

<!-- overlay danmaku text -->
<div class="dm" style="left:0.5px;top:-3px;color:rgb(100,100,100);-webkit-text-stroke:0.5px rgb(100,100,100);width:170.5px;overflow:hidden">止指针乱指，赋值为NULL</div>
<div class="dm" style="left:171px;top:-3px;width:160px;overflow:hidden;color:rgba(255,255,255,.38);-webkit-text-stroke:0.6px rgba(90,90,90,.3)"><span style="margin-left:-170.5px">止指针乱指，赋值为NULL</span></div>
<div class="dm" style="left:736px;top:-4px;color:rgba(255,255,255,.55);-webkit-text-stroke:0.6px rgba(90,90,90,.5)">破音了</div>
<!-- bilibili tv -->
<svg class="a" style="left:1269px;top:612px" width="62" height="56" viewBox="0 0 62 56"><g fill="#afafaf" stroke="none"><rect x="1.800" y="10" width="58.400" height="41" rx="8.500"/><rect x="13.600" y="49" width="5.600" height="4.800" rx="2.400"/><rect x="42.800" y="49" width="5.600" height="4.800" rx="2.400"/></g><path d="M18.300 4.300L26 11M44.300 4.300L36 11" stroke="#afafaf" stroke-width="3.200" stroke-linecap="round" fill="none"/><path d="M23.500 19.500L43 30.700 23.500 42z" fill="#000" stroke="#000" stroke-width="2" stroke-linejoin="round"/></svg>
<!-- taskbar -->
<div id="tbar">
  <div class="a" style="left:245px;top:0;width:49px;height:40px;background:#2a2726"></div>
  <div class="tile" style="left:298px;width:46px"></div><div class="tile" style="left:345px;width:46px"></div><div class="tile" style="left:392px;width:49px"></div>
  <div class="a" style="left:186px;top:8px;width:22px;height:22px;border-radius:50%;background:radial-gradient(circle at 40% 45%,#1c140e,#0a0e14 70%,#000)"></div>
  <i class="ul" style="left:202px;width:39px"></i><i class="ul" style="left:245px;width:49px"></i><i class="ul" style="left:298px;width:42px"></i><i class="ul" style="left:392px;width:49px"></i>
  <svg class="a" style="left:15.600px;top:11.700px" width="17" height="16.600" viewBox="0 0 17 18" preserveAspectRatio="none"><path d="M0 2.600l7-1v7H0zM8 1.400l9-1.300v8.500H8zM0 9.600h7v7l-7-1zM8 9.600h9v8.300l-9-1.300z" fill="#fff"/></svg>
  <svg class="a" style="left:61.500px;top:13.500px" width="20.500" height="14" viewBox="0 0 21 15" preserveAspectRatio="none"><rect x="4.500" y="0.700" width="12" height="13.600" fill="none" stroke="#fff" stroke-width="1.300"/><path d="M2.500 2.500H0.700v10h1.800M18.500 2.500h1.800v10h-1.800" fill="none" stroke="#fff" stroke-width="1.300"/></svg>
  <svg class="a" style="left:111px;top:9px" width="24" height="22" viewBox="0 0 24 22"><path d="M7 1h13l3 3v9l-6 4H6z" fill="#b8bcb8"/><rect x="10" y="3" width="8" height="6" fill="#3a6a3a"/><path d="M1 11l6-2h9l-5 4 1 7-8 1-3-3z" fill="#d8d8d8"/><rect x="3" y="14" width="3" height="3" fill="#444"/><rect x="8" y="14" width="3" height="3" fill="#444"/></svg>
  <svg class="a" style="left:160px;top:8px" width="26" height="24" viewBox="0 0 26 24"><ellipse cx="11" cy="11" rx="10" ry="7.500" transform="rotate(-20 11 11)" fill="#f4f4f4" stroke="#d03030" stroke-width="2"/><path d="M12 6l8 12M20 7l-7 11" stroke="#9ab" stroke-width="1.500"/><circle cx="14" cy="20" r="2.500" fill="none" stroke="#2a6ad0" stroke-width="1.600"/><circle cx="22" cy="19" r="2.500" fill="none" stroke="#2a6ad0" stroke-width="1.600"/></svg>
  <svg class="a" style="left:212px;top:8px" width="18.500" height="24" viewBox="0 0 20 26" preserveAspectRatio="none"><rect x="0" y="0" width="20" height="26" fill="#fff"/><rect x="2.500" y="2.500" width="15" height="5" fill="#000"/><g fill="#000"><rect x="2.500" y="10" width="3.600" height="3"/><rect x="8.200" y="10" width="3.600" height="3"/><rect x="13.900" y="10" width="3.600" height="3"/><rect x="2.500" y="15" width="3.600" height="3"/><rect x="8.200" y="15" width="3.600" height="3"/><rect x="13.900" y="15" width="3.600" height="3"/><rect x="2.500" y="20" width="3.600" height="3"/><rect x="8.200" y="20" width="3.600" height="3"/><rect x="13.900" y="20" width="3.600" height="3"/></g></svg>
  <svg class="a" style="left:258px;top:9px" width="23" height="23" viewBox="0 0 24 24"><circle cx="12" cy="12" r="11.500" fill="#db4437"/><path d="M12 12L2.100 6.200A11.500 11.500 0 0 0 7 22.400z" fill="#0f9d58"/><path d="M12 12L7 22.400A11.500 11.500 0 0 0 23.500 12z" fill="#ffcd40"/><path d="M12 12h11.500A11.500 11.500 0 0 0 2.100 6.200z" fill="#db4437"/><circle cx="12" cy="12" r="5.300" fill="#fff"/><circle cx="12" cy="12" r="4.200" fill="#4285f4"/></svg>
  <svg class="a" style="left:304px;top:7px" width="28" height="27" viewBox="0 0 28 27"><rect x="3" y="2" width="10" height="24" fill="#b8c4f4"/><rect x="12" y="0" width="6" height="26" fill="#3a3ac0"/><rect x="17" y="8" width="7" height="18" fill="#8a9ae8"/><g fill="#20208a"><rect x="4.500" y="4" width="2" height="3"/><rect x="8.500" y="4" width="2" height="3"/><rect x="4.500" y="9" width="2" height="3"/><rect x="8.500" y="9" width="2" height="3"/><rect x="4.500" y="14" width="2" height="3"/><rect x="8.500" y="14" width="2" height="3"/><rect x="4.500" y="19" width="2" height="3"/><rect x="8.500" y="19" width="2" height="3"/></g><rect x="19" y="18" width="8" height="8" fill="#e8e070"/><rect x="0" y="24" width="28" height="3" fill="#6878d8"/></svg>
  <svg class="a" style="left:356px;top:9px" width="26" height="22" viewBox="0 0 26 22"><rect x="1" y="0.500" width="22" height="15" rx="1" fill="#3a78c8" stroke="#9ab" stroke-width="1"/><path d="M3 4h10M3 7h14M3 10h8" stroke="#cfe4ff" stroke-width="1.400"/><rect x="5" y="13" width="20" height="7" fill="#4a9a4a" stroke="#cdc" stroke-width="0.800"/><path d="M8 20v2M12 20v2M16 20v2M20 20v2" stroke="#ccc" stroke-width="1.200"/></svg>
  <svg class="a" style="left:407px;top:10px" width="18" height="21" viewBox="0 0 18 21"><rect width="18" height="21" fill="#2c7f4c"/><path d="M1.500 1.500h15L9.500 17z" fill="#eef6f0"/><text x="5.200" y="9.500" font-family="Liberation Sans,sans-serif" font-weight="bold" font-size="10" fill="#1f6a3a">μ</text><text x="11.500" y="19.500" font-family="Liberation Sans,sans-serif" font-weight="bold" font-style="italic" font-size="8.500" fill="#fff">5</text></svg>
  <!-- dimmed buttons -->
  <div class="dimb" style="left:443px;width:96px;z-index:0"></div><div class="dimb" style="left:541px;width:97px"></div><div class="dimb" style="left:640px;width:95px"></div><div class="dimb" style="left:737px;width:94px;background:#292725"></div><div class="dimb" style="left:833px;width:94px"></div>
  <span class="dimt" style="left:484px">第二十...</span><span class="dimt" style="left:583px">第二十...</span><span class="dimt" style="left:682px">Camta...</span><span class="dimt" style="left:780px">main...</span><span class="dimt" style="left:878px">无标题...</span>
  <div class="a" style="left:548px;top:5px;width:28px;height:27px;background:#3a2620;border-radius:2px;color:#6a3018;font-weight:bold;font-size:22px;line-height:26px;padding-left:3px">P</div>
  <div class="a" style="left:648px;top:9px;width:25px;height:22px;background:#2e3222;transform:skewY(8deg)"></div>
  <div class="a" style="left:745px;top:4px;width:29px;height:30px;background:linear-gradient(90deg,#4a1c16 50%,#1c3a1c 50%);"></div><div class="a" style="left:745px;top:20px;width:29px;height:14px;background:linear-gradient(90deg,#3c3a14 50%,#26204a 50%)"></div>
  <div class="a" style="left:842px;top:9px;width:26px;height:23px;border-radius:50%;background:#1a2c3a"></div>
  <div class="a" style="left:930px;top:1px;width:110px;height:38px;background:#0d0b0a"></div><div class="a" style="left:944px;top:13px;width:15px;height:12px;background:repeating-linear-gradient(#2c2c2c 0 2px,transparent 2px 4px)"></div><div class="a" style="left:966px;top:12px;width:16px;height:16px;border-radius:50%;background:#121c56;color:#3a4880;font-size:12px;font-weight:bold;line-height:16px;text-align:center">?</div>
  <svg class="a" style="left:455px;top:9px" width="23" height="22" viewBox="0 0 23 22"><path d="M0 2h8l2 2h13v15H0z" fill="#f5c84a"/><path d="M0 6h23v13H0z" fill="#fde08a"/><path d="M6 12h11v7H6z" fill="#3a9be8"/><path d="M8.500 15h6v4h-6z" fill="#fde08a"/></svg>
  <i class="ul" style="left:447px;width:39px;background:#9ad2f8"></i>
  <!-- tray -->
  <svg class="a" style="left:1042px;top:12px" width="16" height="18" viewBox="0 0 16 18"><path d="M8 0.500L15.500 3v7c0 4-3.500 6.500-7.500 7.500C4 16.500 0.500 14 0.500 10V3z" fill="#f5a21a"/><path d="M8 2.500v13c-3-1-5.500-3-5.500-6V4.300z" fill="#ffd070"/><path d="M5 11l3-6 1 4 2-2-1 6z" fill="#fff"/></svg>
  <svg class="a" style="left:1066px;top:12px" width="16" height="16" viewBox="0 0 16 16"><rect width="16" height="16" rx="3" fill="#f4f8ff"/><circle cx="5.500" cy="9.500" r="3" fill="none" stroke="#3a8af0" stroke-width="1.600"/><circle cx="10.500" cy="9.500" r="3" fill="none" stroke="#3a8af0" stroke-width="1.600"/><circle cx="8" cy="5.500" r="2.600" fill="none" stroke="#e85a8a" stroke-width="1.500"/></svg>
  <svg class="a" style="left:1090px;top:11px" width="16" height="18" viewBox="0 0 16 18"><ellipse cx="8" cy="10" rx="6.500" ry="7.500" fill="#1a1a1a"/><ellipse cx="8" cy="12" rx="4" ry="5" fill="#fff"/><ellipse cx="8" cy="5" rx="4.500" ry="4.500" fill="#1a1a1a"/><circle cx="6.500" cy="4.500" r="1.100" fill="#fff"/><circle cx="9.500" cy="4.500" r="1.100" fill="#fff"/><ellipse cx="8" cy="7" rx="2.500" ry="1" fill="#f5a21a"/><path d="M2 9.500q6 3 12 0l-1 2.500q-5 2.500-10 0z" fill="#e02020"/><ellipse cx="4.500" cy="17" rx="3" ry="1" fill="#f5a21a"/><ellipse cx="11.500" cy="17" rx="3" ry="1" fill="#f5a21a"/></svg>
  <svg class="a" style="left:1114px;top:13px" width="16" height="13" viewBox="0 0 16 13"><rect width="16" height="13" fill="#fff"/><path d="M2 2.500h2.500a4 4 0 0 1 0 8H2zM14 2.500h-2.500a4 4 0 0 0 0 8H14z" fill="#000"/></svg>
  <svg class="a" style="left:1140px;top:10px" width="14" height="19" viewBox="0 0 14 19"><rect x="2" y="4.500" width="8" height="12" rx="1.500" fill="none" stroke="#fff" stroke-width="1.300"/><rect x="3.500" y="0.700" width="5" height="4" fill="none" stroke="#fff" stroke-width="1.200"/><path d="M7 15l2.500 2.500 4-5" stroke="#fff" stroke-width="1.300" fill="none"/></svg>
  <svg class="a" style="left:1161px;top:13px" width="18" height="14" viewBox="0 0 18 14"><rect x="5.500" y="3.500" width="11" height="7" fill="none" stroke="#fff" stroke-width="1.200"/><rect x="7" y="5" width="8" height="4" fill="#fff"/><rect x="16.500" y="5.500" width="1.500" height="3" fill="#fff"/><path d="M1 1v3M4 1v3M0 4h5v2.500q0 1.500-2.500 1.500v5" stroke="#fff" stroke-width="1.100" fill="none"/></svg>
  <svg class="a" style="left:1187px;top:12px" width="16" height="16" viewBox="0 0 16 16"><path d="M2 15A13 13 0 0 1 15 2" stroke="#fff" stroke-width="1.300" fill="none"/><path d="M6 15A9 9 0 0 1 15 6" stroke="#fff" stroke-width="1.300" fill="none"/><path d="M10 15A5 5 0 0 1 15 10" stroke="#fff" stroke-width="1.300" fill="none"/><circle cx="14" cy="14" r="1.500" fill="#fff"/></svg>
  <svg class="a" style="left:1209px;top:12px" width="16" height="15" viewBox="0 0 16 15"><path d="M1 5h3l4-4v13l-4-4H1z" fill="none" stroke="#fff" stroke-width="1.200"/><path d="M10 4.500q2 3 0 6M12 2.500q3.500 5 0 10M14 1q4.500 6.500 0 13" stroke="#fff" stroke-width="1.100" fill="none"/></svg>
  <span class="a nw" style="left:1234px;top:10px;font-size:14.5px;line-height:18px;color:#fff;font-family:'Liberation Sans','Noto Sans CJK SC',sans-serif">中</span>
  <svg class="a" style="left:1261px;top:11px" width="18" height="18" viewBox="0 0 18 18"><rect x="0" y="0" width="16" height="16" rx="3" fill="#1e90f0"/><circle cx="8" cy="7.500" r="4.200" fill="none" stroke="#fff" stroke-width="1.800"/><path d="M10 10.500l3 3" stroke="#fff" stroke-width="1.800"/><circle cx="15" cy="14.500" r="2" fill="#5ad05a"/></svg>
  <span class="a nw" style="left:1295px;top:1px;width:60px;text-align:center;font-size:12.500px;line-height:18px;color:#fff">12:26</span>
  <span class="a nw" style="left:1290px;top:20px;width:70px;text-align:center;font-size:12.500px;line-height:18px;color:#fff">2020/4/22</span>
</div>
</body>
</html>
